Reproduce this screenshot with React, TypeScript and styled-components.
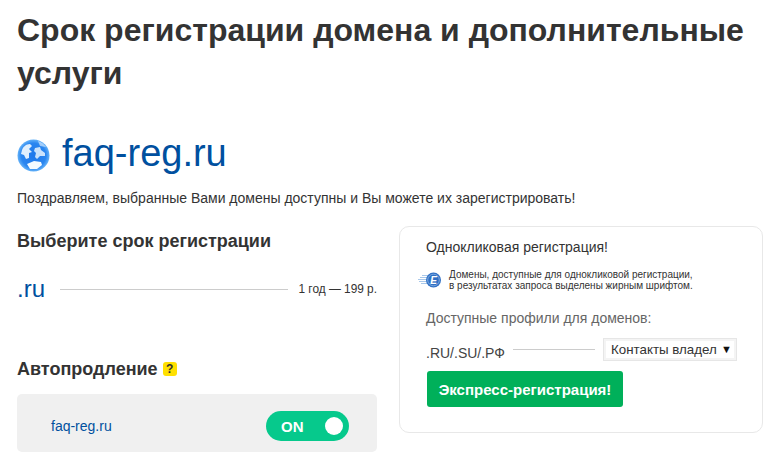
import styled, { createGlobalStyle } from "styled-components"

const GlobalStyle = createGlobalStyle`
    html, body {
        margin: 0;
        padding: 0;
        background: #fff;
        font-family: "Liberation Sans", Arial, sans-serif;
        color: #333;
    }
`

const GlobeIcon = () => (
    <svg width="33" height="33" viewBox="0 0 33 33">
        <defs>
            <radialGradient id="globe" cx="0.5" cy="0.5" r="0.55">
                <stop offset="0" stopColor="#1f78ea" />
                <stop offset="0.7" stopColor="#2a86f0" />
                <stop offset="1" stopColor="#7cc4fb" />
            </radialGradient>
            <filter id="soft" x="-10%" y="-10%" width="120%" height="120%">
                <feGaussianBlur stdDeviation="0.6" />
            </filter>
        </defs>
        <circle cx="16.5" cy="16.5" r="16" fill="url(#globe)" />
        <g fill="#f4fbff" filter="url(#soft)">
            <path d="M5 11c1-3 4-6 8-6l2 2-3 3 3 3-3 1 0 5-3 1-2-4-3-1z" opacity="0.9" />
            <path d="M18 9l5-1 1 3 4 3 0 3-5 0-3 3-2-2 1-4-2-2z" opacity="0.8" />
            <path d="M10 25l7-3 7 1 1 3-5 4-7 0z" />
            <path d="M21 2c3 1 6 3 8 6l-6-1z" opacity="0.55" />
        </g>
    </svg>
)

const ExpressIcon = () => (
    <svg width="24" height="18" viewBox="0 0 24 18">
        <g stroke="#a9c8ea" strokeWidth="1">
            <path d="M4 4.5h7M2 6.5h8M0 8.5h9M1 10.5h9M3 12.5h8" />
        </g>
        <circle cx="15.5" cy="9" r="7.5" fill="#2f6fc4" />
        <circle cx="15.5" cy="9" r="5.8" fill="none" stroke="#8fb8e6" strokeWidth="0.8" />
        <text x="15.5" y="12.5" fontSize="10" fontWeight="700" fontStyle="italic" fontFamily="Liberation Sans" fill="#fff" textAnchor="middle">E</text>
    </svg>
)

export default function App() {
    return (
        <Page>
            <GlobalStyle />
            <Title>Срок регистрации домена и дополнительные услуги</Title>
            <DomainRow>
                <GlobeSlot>
                    <GlobeIcon />
                </GlobeSlot>
                <DomainName>faq-reg.ru</DomainName>
            </DomainRow>
            <Congrats>Поздравляем, выбранные Вами домены доступны и Вы можете их зарегистрировать!</Congrats>
            <Columns>
                <LeftColumn>
                    <SectionTitle>Выберите срок регистрации</SectionTitle>
                    <PeriodRow>
                        <Zone>.ru</Zone>
                        <Line />
                        <Price>1 год — 199 р.</Price>
                    </PeriodRow>
                    <RenewTitle>
                        Автопродление
                        <Hint>?</Hint>
                    </RenewTitle>
                    <RenewBox>
                        <RenewDomain>faq-reg.ru</RenewDomain>
                        <Toggle>
                            ON
                            <Knob />
                        </Toggle>
                    </RenewBox>
                </LeftColumn>
                <Card>
                    <CardTitle>Однокликовая регистрация!</CardTitle>
                    <Note>
                        <ExpressIcon />
                        <NoteText>
                            Домены, доступные для однокликовой регистрации,
                            <br />
                            в результатах запроса выделены жирным шрифтом.
                        </NoteText>
                    </Note>
                    <ProfilesLabel>Доступные профили для доменов:</ProfilesLabel>
                    <ProfileRow>
                        <ProfileZones>.RU/.SU/.РФ</ProfileZones>
                        <Line />
                        <Select>
                            <SelectValue>Контакты владел</SelectValue>
                            <SelectArrow>▼</SelectArrow>
                        </Select>
                    </ProfileRow>
                    <ExpressButton>Экспресс-регистрация!</ExpressButton>
                </Card>
            </Columns>
        </Page>
    )
}

const Page = styled.div`
    width: 782px;
    height: 470px;
    box-sizing: border-box;
    padding: 9px 19px 0 17px;
    overflow: hidden;
`

const Title = styled.h1`
    margin: 0;
    width: 746px;
    font-size: 32px;
    line-height: 43px;
    font-weight: 700;
    color: #333;
`

const DomainRow = styled.div`
    display: flex;
    align-items: center;
    gap: 12px;
    margin-top: 36px;
    height: 44px;
`

const GlobeSlot = styled.div`
    display: flex;
    margin-top: 5px;
`

const DomainName = styled.div`
    font-size: 38px;
    line-height: 44px;
    color: #00509f;
`

const Congrats = styled.p`
    margin: 13px 0 0;
    font-size: 14px;
    line-height: 20px;
    color: #333;
`

const Columns = styled.div`
    display: flex;
    justify-content: space-between;
    align-items: flex-start;
    margin-top: 18px;
`

const LeftColumn = styled.div`
    width: 360px;
    padding-top: 4px;
`

const SectionTitle = styled.h2`
    margin: 0;
    font-size: 18px;
    line-height: 22px;
    font-weight: 700;
    color: #333;
`

const PeriodRow = styled.div`
    display: flex;
    align-items: center;
    margin-top: 22px;
    height: 30px;
`

const Zone = styled.span`
    font-size: 24px;
    color: #00509f;
    margin-right: 15px;
`

const Line = styled.div`
    flex: 1;
    height: 1px;
    background: #ccc;
`

const Price = styled.span`
    font-size: 11.85px;
    color: #333;
    margin-left: 10px;
`

const RenewTitle = styled.h2`
    display: flex;
    align-items: center;
    margin: 54px 0 0;
    font-size: 18px;
    line-height: 22px;
    font-weight: 700;
    color: #333;
`

const Hint = styled.span`
    display: flex;
    align-items: center;
    justify-content: center;
    width: 14px;
    height: 14px;
    margin-left: 5px;
    border-radius: 3px;
    background: #ffe000;
    font-size: 12px;
    color: #333;
`

const RenewBox = styled.div`
    display: flex;
    align-items: center;
    justify-content: space-between;
    box-sizing: border-box;
    height: 58px;
    margin-top: 14px;
    padding: 6px 28px 0 34px;
    border-radius: 5px;
    background: #f0f0f0;
`

const RenewDomain = styled.span`
    font-size: 14px;
    color: #00509f;
`

const Toggle = styled.div`
    display: flex;
    align-items: center;
    justify-content: space-between;
    box-sizing: border-box;
    width: 83px;
    height: 30px;
    padding: 0 6px 0 15px;
    border-radius: 15px;
    background: #06c98c;
    color: #fff;
    font-size: 15px;
    font-weight: 700;
`

const Knob = styled.span`
    width: 18px;
    height: 18px;
    border-radius: 50%;
    background: #fff;
`

const Card = styled.div`
    box-sizing: border-box;
    width: 364px;
    height: 207px;
    padding: 11px 26px 0;
    border: 1px solid #e8e8e8;
    border-radius: 10px;
`

const CardTitle = styled.div`
    font-size: 14px;
    line-height: 18px;
    color: #333;
`

const Note = styled.div`
    display: flex;
    align-items: center;
    gap: 7px;
    margin: 13px 0 0 -8px;
`

const NoteText = styled.div`
    font-size: 10px;
    line-height: 11px;
    color: #333;
`

const ProfilesLabel = styled.div`
    margin-top: 18px;
    font-size: 14px;
    line-height: 18px;
    color: #666;
`

const ProfileRow = styled.div`
    display: flex;
    align-items: center;
    margin: 10px -1px 0 0;
    height: 24px;
`

const ProfileZones = styled.span`
    font-size: 14px;
    color: #444;
    margin-right: 8px;
    padding-top: 7px;
`

const Select = styled.div`
    display: flex;
    align-items: center;
    justify-content: space-between;
    box-sizing: border-box;
    width: 134px;
    height: 23px;
    margin-left: 8px;
    padding: 0 4px 0 7px;
    border: 1px solid #e6e6e6;
    outline: 2px solid #f4f4f4;
    outline-offset: -3px;
    font-size: 13.33px;
    color: #333;
`

const SelectValue = styled.span`
    white-space: nowrap;
`

const SelectArrow = styled.span`
    font-size: 11px;
    color: #111;
`

const ExpressButton = styled.button`
    display: block;
    box-sizing: border-box;
    width: 196px;
    height: 36px;
    margin: 10px 0 0 1px;
    padding: 0;
    border: 0;
    border-radius: 3px;
    background: #00b05a;
    color: #fff;
    font-family: inherit;
    font-size: 15px;
    font-weight: 700;
`
